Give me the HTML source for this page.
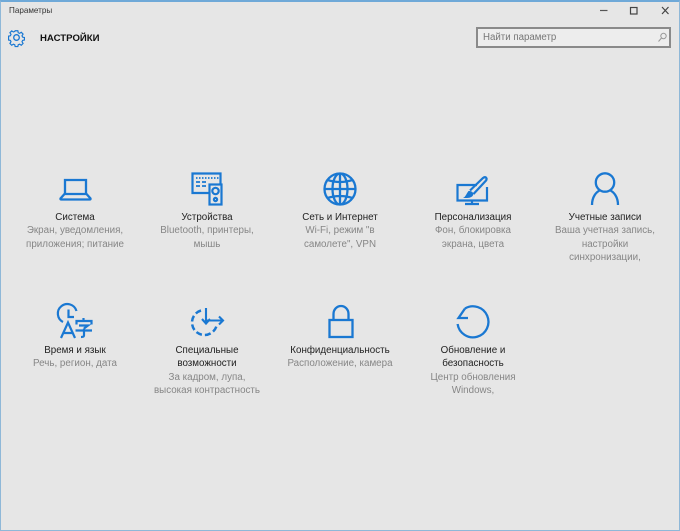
<!DOCTYPE html>
<html lang="ru">
<head>
<meta charset="utf-8">
<style>
html,body{margin:0;padding:0}
body{width:680px;height:531px;overflow:hidden;position:relative;background:#e6e6e6;font-family:"Liberation Sans",sans-serif}
#frame{position:absolute;left:0;top:0;width:680px;height:531px;box-sizing:border-box;border:1px solid #8fb8d8;border-top:2px solid #6fa9d8}
.t{position:absolute;white-space:nowrap;text-align:center;transform:translateX(-50%);font-size:9.8px;line-height:13.4px}
.t b{display:block;font-weight:normal;color:#222}
.t span{display:block;color:#868686}
svg{position:absolute;overflow:visible}
.i{fill:none;stroke:#1a78d2;stroke-width:2.3}
</style>
</head>
<body>
<div id="frame"></div>
<div style="position:absolute;left:9px;top:5px;font-size:8.1px;line-height:12px;color:#333">Параметры</div>
<!-- window buttons -->
<svg style="left:595px;top:5px" width="80" height="12" viewBox="0 0 80 12">
<path d="M5 5.5h7.5" stroke="#555" stroke-width="1.2" fill="none"/>
<rect x="35.5" y="2.5" width="6.5" height="6.5" fill="none" stroke="#444" stroke-width="1.2"/>
<path d="M67 2l6.5 7M73.5 2L67 9" stroke="#444" stroke-width="1.2" fill="none"/>
</svg>
<!-- gear -->
<svg style="left:8px;top:29px" width="17" height="17" viewBox="0 0 17 17">
<circle cx="8.5" cy="8.5" r="2.8" fill="none" stroke="#1a78d2" stroke-width="1.3"/>
<path d="M7 1h3l.4 2.2 1.5.7 1.9-1.2 2 2-1.2 1.9.7 1.5 2 .4v2.800l-2 .4-.7 1.500 1.200 1.900-2 2-1.900-1.200-1.500.7-.4 2h-3l-.4-2-1.500-.7-1.900 1.200-2-2 1.200-1.900-.7-1.500-2-.4V7l2-.4.7-1.500L1.200 3.200l2-2 1.900 1.200 1.500-.7z" transform="translate(.85 .85) scale(.9)" fill="none" stroke="#1a78d2" stroke-width="1.3"/>
</svg>
<div style="position:absolute;left:40px;top:32px;font-size:9.6px;line-height:13px;color:#111;font-weight:bold">НАСТРОЙКИ</div>
<!-- search -->
<div style="position:absolute;left:476px;top:27px;width:195px;height:21px;box-sizing:border-box;border:2px solid #8a8a8a;background:#ededed"></div>
<div style="position:absolute;left:483px;top:31px;font-size:9.7px;line-height:13px;color:#777">Найти параметр</div>
<svg style="left:657px;top:32px" width="11" height="11" viewBox="0 0 11 11"><circle cx="6.5" cy="4" r="2.7" fill="none" stroke="#999"/><path d="M4.500 6L1.500 9.500" stroke="#999" fill="none"/></svg>

<!-- laptop -->
<svg class="i" style="left:59px;top:178px" width="33" height="24" viewBox="0 0 33 24"><path d="M6 16V2h21v14"/><path d="M5.500 16L1.500 20.500q-.3 1 .8 1h28.400q1.100 0 .8-1L27.500 16z"/></svg>
<!-- devices -->
<svg style="left:191px;top:172px" width="32" height="34" viewBox="0 0 32 34">
<g fill="none" stroke="#1a78d2" stroke-width="2.2">
<path d="M18 21H1.500V1.500h28V12"/>
<rect x="18.5" y="12.5" width="12" height="20"/>
<circle cx="24.5" cy="19" r="3.2"/>
<circle cx="24.5" cy="27.5" r="1.6"/>
</g>
<path d="M5 6h1.500M8 6h1.500M11 6h1.500M14 6h1.500M17 6h1.500M20 6h1.500M23 6h1.500M26 6h1.500" stroke="#1a78d2" stroke-width="1.8"/>
<path d="M5 10h4M11 10h4M5 14h4M11 14h4" stroke="#1a78d2" stroke-width="1.8"/>
</svg>
<!-- globe -->
<svg class="i" style="left:323px;top:172px" width="34" height="34" viewBox="0 0 34 34"><circle cx="17" cy="17" r="15.5"/><ellipse cx="17" cy="17" rx="7.500" ry="15.500"/><path d="M17 1.500v31M1.500 17h31M4.500 8q12.500 4 25 0M4.500 26q12.500-4 25 0"/></svg>
<!-- personalization -->
<svg style="left:455px;top:175px" width="34" height="31" viewBox="0 0 34 31">
<g fill="none" stroke="#1a78d2" stroke-width="2.2">
<path d="M22 10H2.500v15.500h29.500V12"/>
<path d="M17 25.500v3.500M10 29h14"/>
<path d="M15 15.500L28 3q2-1.500 3.200-.2 1 1.200-.4 3L18.500 19"/>
</g>
<path d="M13.500 16q4-.5 5 3-1 4-6.500 4-3 0-4 0 2-1 3-3t2.500-4z" fill="#1a78d2"/>
</svg>
<!-- user -->
<svg class="i" style="left:590px;top:172px" width="30" height="34" viewBox="0 0 30 34"><circle cx="15" cy="10.500" r="9.200"/><path d="M2 33c0-8 4-13 8.500-15M28 33c0-8-4-13-8.500-15"/></svg>

<!-- time & lang -->
<svg style="left:58px;top:305px" width="36" height="34" viewBox="0 0 36 34">
<g fill="none" stroke="#1a78d2" stroke-width="2.200">
<path d="M5 17A9.500 9.500 0 1 1 18.500 6"/>
<path d="M10.500 4.500v7.500h5.500"/>
<path d="M3 33L10 17.500l7 15.500M5.500 28h9"/>
<path d="M25.500 13v2.500M18.500 19.500v-3.500h15v3.500M21 20.500h9l-4 3M17.500 25.500h16.500M26 23.500V30.500q0 1.500-3 1.500"/>
</g>
</svg>
<!-- ease of access -->
<svg style="left:190px;top:305px" width="36" height="34" viewBox="0 0 36 34">
<path d="M11 5.500A12.500 12.500 0 1 0 26.500 21" fill="none" stroke="#1a78d2" stroke-width="2.500" stroke-dasharray="6 3"/>
<path d="M16 3v15M16 15.500h17M12 14l4 4.500 4-4.500M29 11.500l4 4-4 4" fill="none" stroke="#1a78d2" stroke-width="2.100"/>
</svg>
<!-- lock -->
<svg class="i" style="left:328px;top:305px" width="25" height="33" viewBox="0 0 25 33"><rect x="1.500" y="15" width="23" height="17"/><path d="M5.500 15V9a7.500 8 0 0 1 15 0V15"/></svg>
<!-- update -->
<svg class="i" style="left:456px;top:305px" width="34" height="34" viewBox="0 0 34 34"><path d="M9 3.500A15.500 15.500 0 1 1 1.600 19"/><path d="M9 3.500L2.500 13H12"/></svg>

<div class="t" style="left:75px;top:211px"><b>Система</b><span>Экран, уведомления,</span><span>приложения; питание</span></div>
<div class="t" style="left:207px;top:211px"><b>Устройства</b><span>Bluetooth, принтеры,</span><span>мышь</span></div>
<div class="t" style="left:340px;top:211px"><b>Сеть и Интернет</b><span>Wi-Fi, режим "в</span><span>самолете", VPN</span></div>
<div class="t" style="left:473px;top:211px"><b>Персонализация</b><span>Фон, блокировка</span><span>экрана, цвета</span></div>
<div class="t" style="left:605px;top:211px"><b>Учетные записи</b><span>Ваша учетная запись,</span><span>настройки</span><span>синхронизации,</span></div>
<div class="t" style="left:75px;top:344px"><b>Время и язык</b><span>Речь, регион, дата</span></div>
<div class="t" style="left:207px;top:344px"><b>Специальные</b><b>возможности</b><span>За кадром, лупа,</span><span>высокая контрастность</span></div>
<div class="t" style="left:340px;top:344px"><b>Конфиденциальность</b><span>Расположение, камера</span></div>
<div class="t" style="left:473px;top:344px"><b>Обновление и</b><b>безопасность</b><span>Центр обновления</span><span>Windows,</span></div>
</body>
</html>
